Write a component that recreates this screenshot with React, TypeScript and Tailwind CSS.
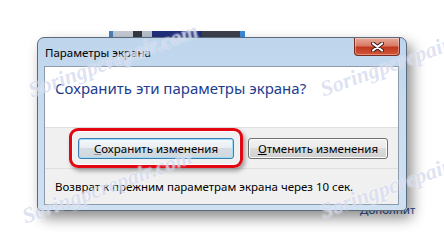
import { ReactNode } from "react";

const FONT = "font-['Noto_Sans','DejaVu_Sans',sans-serif]";

function Watermark({ x, y }: { x: number; y: number }) {
  return (
    <span
      className="pointer-events-none absolute z-30 -translate-x-1/2 -translate-y-1/2 -rotate-[20deg] whitespace-nowrap font-['Liberation_Serif',serif] text-[22px] font-bold italic text-[rgba(150,165,215,0.32)] [text-shadow:0_0_2px_rgba(255,255,255,0.9)]"
      style={{ left: x, top: y }}
    >
      Soringpcrepair.com
    </span>
  );
}

function WinButton({ children, primary }: { children: ReactNode; primary?: boolean }) {
  return (
    <button
      type="button"
      className={
        "flex h-[21px] items-center justify-center rounded-[3px] border text-[11.5px] text-black " +
        (primary
          ? "w-[156px] border-[#3c7fb1] bg-[linear-gradient(#f4f9fc_0%,#e8eef2_45%,#d6dde2_50%,#cfd8de_100%)] shadow-[inset_0_0_0_1px_#9fdcf7]"
          : "w-[140px] border-[#707070] bg-[linear-gradient(#f2f2f2_0%,#ebebeb_45%,#dddddd_50%,#cfcfcf_100%)] shadow-[inset_0_0_0_1px_#fcfcfc]")
      }
    >
      {children}
    </button>
  );
}

export default function App() {
  return (
    <div className={`relative h-[249px] w-[444px] overflow-hidden bg-white pt-[31px] ${FONT}`}>
      {/* window behind the dialog */}
      <div className="ml-[109px] flex h-[6px] w-[136px]">
        <div className="w-[4px] bg-[#4a7fb8]" />
        <div className="w-[20px] bg-[#c4cad2]" />
        <div className="w-[9px] bg-[#333842]" />
        <div className="w-[10px] bg-[#b8c0ca]" />
        <div className="w-[50px] bg-[#22307c]" />
        <div className="w-[38px] bg-[#3b404b]" />
        <div className="w-[5px] bg-[#3c8ad8]" />
      </div>

      <span className="absolute left-[360px] top-[201px] text-[11.5px] text-[#1d4f96]">Дополнит</span>

      {/* dialog */}
      <div className="relative z-10 ml-[37px] flex h-[174px] w-[370px] flex-col rounded-t-[7px] rounded-b-[4px] border border-[#5b6a7c] bg-[linear-gradient(#bed5ec,#c9dcef_40%,#cfe0f1)] shadow-[5px_7px_14px_rgba(0,0,0,0.45)]">
        <div className="flex h-[28px] items-start justify-between pl-[7px] pr-[6px]">
          <span className="mt-[6px] text-[11.5px] text-black">Параметры экрана</span>
          <div className="flex h-[18px] w-[46px] items-center justify-center rounded-b-[4px] border border-t-0 border-[#7a2a1e] bg-[linear-gradient(#e6a999_0%,#d97a66_45%,#c1391f_55%,#d2553a_100%)] shadow-[inset_0_0_0_1px_rgba(255,255,255,0.35)]">
            <svg width="13" height="10" viewBox="0 0 13 10">
              <path d="M2 1.5 L11 8.5 M11 1.5 L2 8.5" stroke="#3a1a14" strokeWidth="4" strokeLinecap="round" />
              <path d="M2 1.5 L11 8.5 M11 1.5 L2 8.5" stroke="#ffffff" strokeWidth="2.2" strokeLinecap="round" />
            </svg>
          </div>
        </div>

        <div className="mb-[5px] ml-[6px] mr-[7px] flex flex-1 flex-col border border-[#8b9bab] bg-white">
          <div className="h-[60px] pl-[10px] pt-[10px] text-[15px] text-[#1e3d8f]">
            Сохранить эти параметры экрана?
          </div>
          <div className="flex h-[41px] items-start justify-end gap-[14px] border-t border-[#dfdfdf] bg-[#f0f0f0] pr-[10px] pt-[10px]">
            <div className="relative">
              <WinButton primary>
                <span className="underline decoration-[#9a9a9a]">С</span>охранить изменения
              </WinButton>
              <div className="pointer-events-none absolute -bottom-[9px] -left-[9px] -right-[9px] -top-[10px] rounded-[9px] border-[3px] border-[#e30613] shadow-[2px_3px_4px_rgba(0,0,0,0.35),inset_0_0_0_1px_#ffffff]" />
            </div>
            <WinButton>
              <span className="underline">О</span>тменить изменения
            </WinButton>
          </div>
          <div className="flex flex-1 items-center border-t border-[#dfdfdf] bg-[#f0f0f0] pl-[10px] text-[11.5px] text-black">
            Возврат к прежним параметрам экрана через 10 сек.
          </div>
        </div>
      </div>

      <Watermark x={113} y={60} />
      <Watermark x={405} y={59} />
      <Watermark x={107} y={186} />
      <Watermark x={405} y={181} />
    </div>
  );
}
